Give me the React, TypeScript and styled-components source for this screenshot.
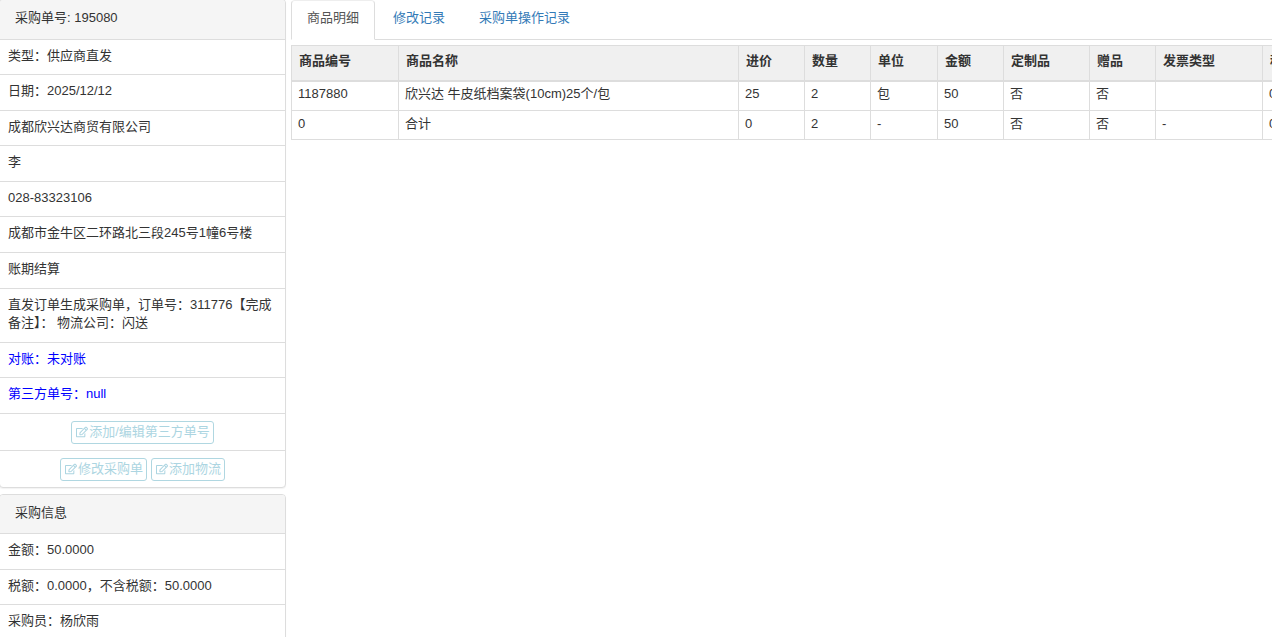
import React from "react";
import styled, { createGlobalStyle } from "styled-components";
import { FaRegEdit } from "react-icons/fa";

const GlobalStyle = createGlobalStyle`
  * {
    box-sizing: border-box;
  }
  html, body {
    margin: 0;
    height: 637px;
    overflow: hidden;
    background: #fff;
    font-family: "Liberation Sans", "Noto Sans CJK SC", sans-serif;
    font-size: 13px;
    line-height: 1.42857;
    color: #333;
  }
`;

const Page = styled.div`
  display: flex;
  align-items: flex-start;
  gap: 5px;
  height: 637px;
  margin-left: -1px;
  overflow: hidden;
`;

const Sidebar = styled.aside`
  flex: 0 0 287px;
  display: flex;
  flex-direction: column;
  gap: 6px;
  margin-top: -1px;
`;

const Panel = styled.section`
  background: #fff;
  border: 1px solid #ddd;
  border-radius: 4px;
  box-shadow: 0 1px 1px rgba(0, 0, 0, 0.05);
`;

const PanelHeading = styled.div`
  padding: 9px 15px 11px;
  background: #f5f5f5;
  border-bottom: 1px solid #ddd;
  border-radius: 3px 3px 0 0;
`;

const Row = styled.div<{ $blue?: boolean }>`
  padding: 7px 8px 9px;
  color: ${(p) => (p.$blue ? "#0000ff" : "#333")};
  & + & {
    border-top: 1px solid #ddd;
  }
`;

const ButtonRow = styled.div`
  display: flex;
  justify-content: center;
  gap: 4px;
  padding: 7px 8px 6px;
  border-top: 1px solid #ddd;
`;

const OutlineButton = styled.button`
  display: inline-flex;
  align-items: center;
  height: 23px;
  padding: 0 3px;
  border: 1px solid #86c2d2;
  border-radius: 3px;
  background: #fff;
  color: #80bfd2;
  font: inherit;
  opacity: 0.65;
  svg {
    flex: none;
    margin: 0 1px 0 1px;
  }
`;

const Main = styled.main`
  flex: 1;
  min-width: 0;
`;

const Tabs = styled.nav`
  display: flex;
  align-items: flex-start;
  gap: 2px;
  height: 40px;
  border-bottom: 1px solid #ddd;
`;

const Tab = styled.a<{ $active?: boolean }>`
  height: ${(p) => (p.$active ? "40px" : "39px")};
  padding: 8px 15px;
  border: 1px solid ${(p) => (p.$active ? "#ddd" : "transparent")};
  border-bottom-color: ${(p) => (p.$active ? "#fff" : "transparent")};
  border-top-color: ${(p) => (p.$active ? "#eee" : "transparent")};
  border-radius: 4px 4px 0 0;
  background: ${(p) => (p.$active ? "#fff" : "transparent")};
  color: ${(p) => (p.$active ? "#555" : "#337ab7")};
`;

const Table = styled.table`
  table-layout: fixed;
  width: 1081px;
  margin-top: 5px;
  border-collapse: collapse;
  border-spacing: 0;
`;

const Th = styled.th<{ $w: number }>`
  width: ${(p) => p.$w}px;
  height: 35px;
  padding: 0 8px 2px 7px;
  background: #f0f0f0;
  border: 1px solid #ddd;
  border-bottom-width: 2px;
  text-align: left;
  font-weight: 700;
  white-space: nowrap;
  overflow: hidden;
`;

const Td = styled.td`
  height: 29.5px;
  padding: 0 6px 2px;
  border: 1px solid #ddd;
  white-space: nowrap;
  overflow: hidden;
  tr:last-child > & {
    padding-bottom: 0;
  }
`;

const columns: [string, number][] = [
  ["商品编号", 107],
  ["商品名称", 340],
  ["进价", 66],
  ["数量", 66],
  ["单位", 67],
  ["金额", 66],
  ["定制品", 86],
  ["赠品", 66],
  ["发票类型", 107],
  ["税率", 110],
];

const rows = [
  ["1187880", "欣兴达 牛皮纸档案袋(10cm)25个/包", "25", "2", "包", "50", "否", "否", "", "0"],
  ["0", "合计", "0", "2", "-", "50", "否", "否", "-", "0"],
];

const EditIcon = () => <FaRegEdit size={12} />;

const App = () => (
  <>
    <GlobalStyle />
    <Page>
      <Sidebar>
        <Panel>
          <PanelHeading>采购单号: 195080</PanelHeading>
          <Row>类型：供应商直发</Row>
          <Row>日期：2025/12/12</Row>
          <Row>成都欣兴达商贸有限公司</Row>
          <Row>李</Row>
          <Row>028-83323106</Row>
          <Row>成都市金牛区二环路北三段245号1幢6号楼</Row>
          <Row>账期结算</Row>
          <Row>直发订单生成采购单，订单号：311776【完成备注】： 物流公司：闪送</Row>
          <Row $blue>对账：未对账</Row>
          <Row $blue>第三方单号：null</Row>
          <ButtonRow>
            <OutlineButton>
              <EditIcon />
              添加/编辑第三方单号
            </OutlineButton>
          </ButtonRow>
          <ButtonRow>
            <OutlineButton>
              <EditIcon />
              修改采购单
            </OutlineButton>
            <OutlineButton>
              <EditIcon />
              添加物流
            </OutlineButton>
          </ButtonRow>
        </Panel>
        <Panel>
          <PanelHeading>采购信息</PanelHeading>
          <Row>金额：50.0000</Row>
          <Row>税额：0.0000，不含税额：50.0000</Row>
          <Row>采购员：杨欣雨</Row>
        </Panel>
      </Sidebar>
      <Main>
        <Tabs>
          <Tab $active>商品明细</Tab>
          <Tab>修改记录</Tab>
          <Tab>采购单操作记录</Tab>
        </Tabs>
        <Table>
          <thead>
            <tr>
              {columns.map(([title, width]) => (
                <Th key={title} $w={width}>
                  {title}
                </Th>
              ))}
            </tr>
          </thead>
          <tbody>
            {rows.map((row) => (
              <tr key={row[0]}>
                {row.map((cell, i) => (
                  <Td key={i}>{cell}</Td>
                ))}
              </tr>
            ))}
          </tbody>
        </Table>
      </Main>
    </Page>
  </>
);

export default App;
